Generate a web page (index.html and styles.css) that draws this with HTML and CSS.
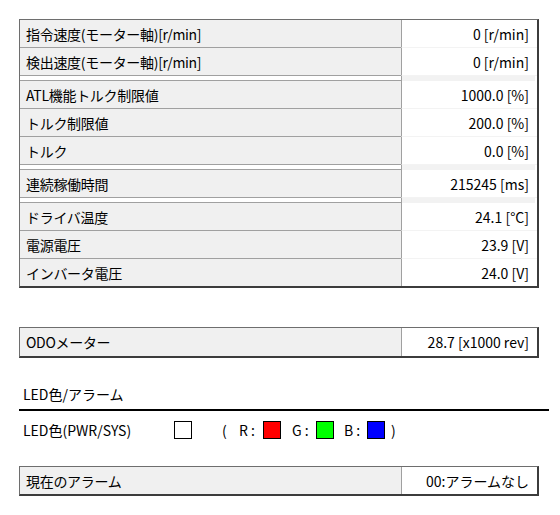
FILE: index.html
```html
<!DOCTYPE html>
<html lang="ja">
<head>
<meta charset="utf-8">
<link rel="stylesheet" href="styles.css">
</head>
<body>
<div class="panel">
  <div class="row"><div class="label">指令速度(モーター軸)[r/min]</div><div class="value">0 [r/min]</div></div>
  <div class="row"><div class="label">検出速度(モーター軸)[r/min]</div><div class="value">0 [r/min]</div></div>
  <div class="gap"><div class="label"></div><div class="value"></div></div>
  <div class="row"><div class="label">ATL機能トルク制限値</div><div class="value">1000.0 [%]</div></div>
  <div class="row"><div class="label">トルク制限値</div><div class="value">200.0 [%]</div></div>
  <div class="row"><div class="label">トルク</div><div class="value">0.0 [%]</div></div>
  <div class="gap"><div class="label"></div><div class="value"></div></div>
  <div class="row"><div class="label">連続稼働時間</div><div class="value">215245 [ms]</div></div>
  <div class="gap"><div class="label"></div><div class="value"></div></div>
  <div class="row"><div class="label">ドライバ温度</div><div class="value">24.1 [°C]</div></div>
  <div class="row"><div class="label">電源電圧</div><div class="value">23.9 [V]</div></div>
  <div class="row last"><div class="label">インバータ電圧</div><div class="value">24.0 [V]</div></div>
</div>

<div class="box odo">
  <div class="label">ODOメーター</div><div class="value">28.7 [x1000 rev]</div>
</div>

<div class="section-title">LED色/アラーム</div>

<div class="led-row">
  <span class="led-label">LED色(PWR/SYS)</span>
  <span class="swatch white"></span>
  <span class="paren-open">(</span>
  <span class="chan">R :</span>
  <span class="swatch red"></span>
  <span class="chan g">G :</span>
  <span class="swatch green"></span>
  <span class="chan b">B :</span>
  <span class="swatch blue"></span>
  <span class="paren-close">)</span>
</div>

<div class="box alarm">
  <div class="label">現在のアラーム</div><div class="value">00:アラームなし</div>
</div>
</body>
</html>
```
FILE: styles.css
```css
* { box-sizing: border-box; }

body {
  margin: 0;
  padding: 19px 0 0 19px;
  background: #fff;
  color: #000;
  font-family: "Noto Sans CJK JP", "Noto Sans", sans-serif;
  font-size: 14px;
  line-height: 1;
}

.panel {
  width: 520px;
  border-top: 1px solid #6e6e6e;
  border-left: 1px solid #6e6e6e;
  border-right: 2px solid #3c3c3c;
  border-bottom: 2px solid #3c3c3c;
}

.row {
  display: flex;
  height: 28px;
}

.row.last { height: 27px; }

.label {
  width: 381px;
  display: flex;
  align-items: center;
  padding-left: 6px;
  background: #f0f0f0;
  border-bottom: 1px solid #a0a0a0;
  white-space: nowrap;
  letter-spacing: -0.3px;
}

.value {
  flex: 1;
  display: flex;
  align-items: center;
  justify-content: flex-end;
  padding-right: 8px;
  background: #fff;
  border-left: 1px solid #a0a0a0;
  border-bottom: 1px solid #f3f3f3;
  white-space: nowrap;
}

.row.last .label,
.row.last .value { border-bottom: none; }

.gap {
  display: flex;
  height: 5px;
}

.gap .label {
  background: #fff;
  border-bottom: 1px solid #a0a0a0;
}

.gap .value {
  background: #f2f2f2;
  border-bottom: none;
  margin-right: 2px;
}

.box {
  display: flex;
  width: 520px;
  border-top: 1px solid #6e6e6e;
  border-left: 1px solid #6e6e6e;
  border-right: 2px solid #3c3c3c;
  border-bottom: 2px solid #3c3c3c;
}

.box .label,
.box .value { border-bottom: none; }

.odo {
  margin-top: 39px;
  height: 31px;
}

.section-title {
  width: 530px;
  margin-top: 26px;
  padding: 0 0 5px 4px;
  line-height: 20px;
  border-bottom: 2px solid #000;
}

.led-row {
  display: flex;
  align-items: center;
  height: 38px;
  padding-left: 4px;
}

.led-label { width: 151px; }

.swatch {
  width: 18px;
  height: 18px;
  border: 1px solid #000;
  background: #fff;
}

.swatch.red { background: #ff0000; }
.swatch.green { background: #00ff00; }
.swatch.blue { background: #0000ff; }

.paren-open {
  margin-left: 30px;
  width: 17px;
}

.chan { width: 24px; }
.chan.g { margin-left: 11px; }
.chan.b { margin-left: 10px; width: 23px; }

.paren-close { margin-left: 6px; }

.alarm {
  margin-top: 17px;
  height: 30px;
}
```
